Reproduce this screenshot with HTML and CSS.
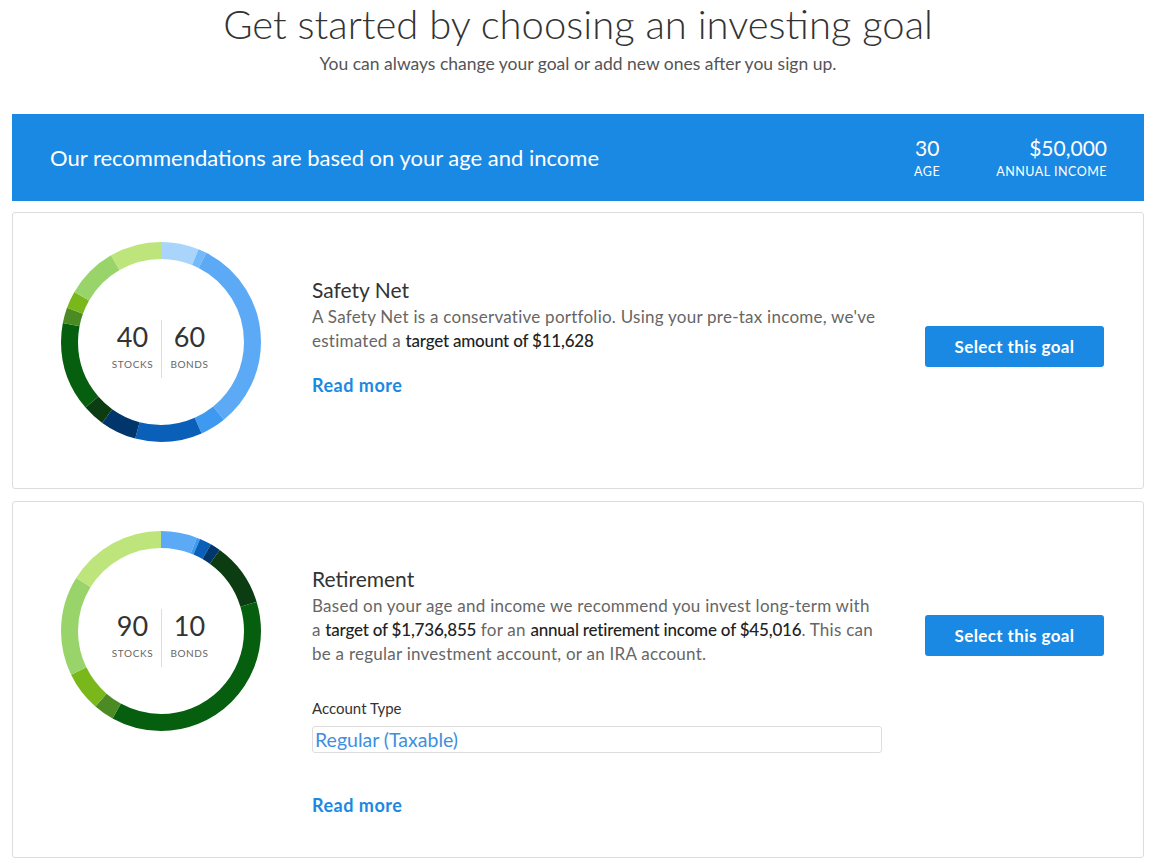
FILE: index.html
```html
<!DOCTYPE html>
<html lang="en">

<head>
    <meta charset="UTF-8">
    <meta name="viewport" content="width=device-width, initial-scale=1.0">
    <title>Choose a goal</title>
    <link rel="stylesheet" href="styles.css">
</head>

<body>
    <header class="intro">
        <h1>Get started by choosing an investing goal</h1>
        <p>You can always change your goal or add new ones after you sign up.</p>
    </header>

    <div class="banner">
        <p class="banner-text">Our recommendations are based on your age and income</p>
        <div class="stats">
            <div class="stat stat-age">
                <span class="stat-value">30</span>
                <span class="stat-label">Age</span>
            </div>
            <div class="stat stat-income">
                <span class="stat-value">$50,000</span>
                <span class="stat-label">Annual income</span>
            </div>
        </div>
    </div>

    <!-- Safety net -->
    <div class="goal-card">
        <div class="donut">
            <svg viewBox="0 0 200 200" width="200" height="200">
                <g transform="rotate(-90 100 100)" fill="none" stroke-width="17">
                    <circle cx="100" cy="100" r="91.5" pathLength="360" stroke="#a9d5fc" stroke-dasharray="22 360" stroke-dashoffset="0" />
                    <circle cx="100" cy="100" r="91.5" pathLength="360" stroke="#74baf8" stroke-dasharray="5 360" stroke-dashoffset="-22" />
                    <circle cx="100" cy="100" r="91.5" pathLength="360" stroke="#5caaf6" stroke-dasharray="114 360" stroke-dashoffset="-27" />
                    <circle cx="100" cy="100" r="91.5" pathLength="360" stroke="#3d9af0" stroke-dasharray="15 360" stroke-dashoffset="-141" />
                    <circle cx="100" cy="100" r="91.5" pathLength="360" stroke="#0a5fb8" stroke-dasharray="39 360" stroke-dashoffset="-156" />
                    <circle cx="100" cy="100" r="91.5" pathLength="360" stroke="#00366b" stroke-dasharray="21 360" stroke-dashoffset="-195" />
                    <circle cx="100" cy="100" r="91.5" pathLength="360" stroke="#0c3c12" stroke-dasharray="13 360" stroke-dashoffset="-216" />
                    <circle cx="100" cy="100" r="91.5" pathLength="360" stroke="#065e0f" stroke-dasharray="52 360" stroke-dashoffset="-229" />
                    <circle cx="100" cy="100" r="91.5" pathLength="360" stroke="#4c8a24" stroke-dasharray="9 360" stroke-dashoffset="-281" />
                    <circle cx="100" cy="100" r="91.5" pathLength="360" stroke="#79b71a" stroke-dasharray="10 360" stroke-dashoffset="-290" />
                    <circle cx="100" cy="100" r="91.5" pathLength="360" stroke="#98d46a" stroke-dasharray="30 360" stroke-dashoffset="-300" />
                    <circle cx="100" cy="100" r="91.5" pathLength="360" stroke="#bde57b" stroke-dasharray="30 360" stroke-dashoffset="-330" />
                </g>
            </svg>
            <div class="donut-center">
                <div class="split">
                    <span class="split-num">40</span>
                    <span class="split-label">Stocks</span>
                </div>
                <div class="split">
                    <span class="split-num">60</span>
                    <span class="split-label">Bonds</span>
                </div>
            </div>
        </div>
        <div class="goal-info">
            <h2>Safety Net</h2>
            <p>A Safety Net is a conservative portfolio. Using your pre-tax income, we've estimated a <strong>target amount of $11,628</strong></p>
            <a href="#" class="read-more">Read more</a>
        </div>
        <button class="select-btn">Select this goal</button>
    </div>

    <!-- Retirement -->
    <div class="goal-card">
        <div class="donut">
            <svg viewBox="0 0 200 200" width="200" height="200">
                <g transform="rotate(-90 100 100)" fill="none" stroke-width="17">
                    <circle cx="100" cy="100" r="91.5" pathLength="360" stroke="#5caaf6" stroke-dasharray="21 360" stroke-dashoffset="0" />
                    <circle cx="100" cy="100" r="91.5" pathLength="360" stroke="#3d9af0" stroke-dasharray="2 360" stroke-dashoffset="-21" />
                    <circle cx="100" cy="100" r="91.5" pathLength="360" stroke="#0a5fb8" stroke-dasharray="7 360" stroke-dashoffset="-23" />
                    <circle cx="100" cy="100" r="91.5" pathLength="360" stroke="#00366b" stroke-dasharray="6 360" stroke-dashoffset="-30" />
                    <circle cx="100" cy="100" r="91.5" pathLength="360" stroke="#0c3c12" stroke-dasharray="37 360" stroke-dashoffset="-36" />
                    <circle cx="100" cy="100" r="91.5" pathLength="360" stroke="#065e0f" stroke-dasharray="136 360" stroke-dashoffset="-73" />
                    <circle cx="100" cy="100" r="91.5" pathLength="360" stroke="#4c8a24" stroke-dasharray="12 360" stroke-dashoffset="-209" />
                    <circle cx="100" cy="100" r="91.5" pathLength="360" stroke="#79b71a" stroke-dasharray="23 360" stroke-dashoffset="-221" />
                    <circle cx="100" cy="100" r="91.5" pathLength="360" stroke="#98d46a" stroke-dasharray="58 360" stroke-dashoffset="-244" />
                    <circle cx="100" cy="100" r="91.5" pathLength="360" stroke="#bde57b" stroke-dasharray="58 360" stroke-dashoffset="-302" />
                </g>
            </svg>
            <div class="donut-center">
                <div class="split">
                    <span class="split-num">90</span>
                    <span class="split-label">Stocks</span>
                </div>
                <div class="split">
                    <span class="split-num">10</span>
                    <span class="split-label">Bonds</span>
                </div>
            </div>
        </div>
        <div class="goal-info">
            <h2>Retirement</h2>
            <p>Based on your age and income we recommend you invest long-term with a <strong>target of $1,736,855</strong> for an <strong>annual retirement income of $45,016</strong>. This can be a regular investment account, or an IRA account.</p>
            <label class="field-label" for="accountType">Account Type</label>
            <div class="select-box" id="accountType">Regular (Taxable)</div>
            <a href="#" class="read-more read-more-spaced">Read more</a>
        </div>
        <button class="select-btn">Select this goal</button>
    </div>
</body>

</html>
```

FILE: styles.css
```css
body {
    font-family: Lato, "Open Sans", sans-serif;
    margin: 0;
    padding: 0 12px;
    background-color: #fff;
    color: #666;
}

.intro {
    text-align: center;
    padding-top: 1px;
}

.intro h1 {
    margin: 0;
    font-size: 40px;
    font-weight: 300;
    line-height: 46px;
    color: #333;
}

.intro p {
    margin: 6px 0 0;
    font-size: 17.5px;
    line-height: 22px;
    color: #555;
}

.banner {
    display: flex;
    align-items: center;
    justify-content: space-between;
    height: 87px;
    margin-top: 39px;
    padding: 0 37px 0 38px;
    background-color: #1a89e3;
    color: #fff;
}

.banner-text {
    margin: 0;
    font-size: 22px;
    font-weight: 400;
}

.stats {
    display: flex;
    gap: 56px;
}

.stat {
    display: flex;
    flex-direction: column;
    gap: 4px;
}

.stat-age {
    align-items: center;
}

.stat-income {
    align-items: flex-end;
}

.stat-value {
    font-size: 21px;
    line-height: 24px;
}

.stat-label {
    font-size: 12.5px;
    line-height: 16px;
    text-transform: uppercase;
    letter-spacing: 0.5px;
}

.goal-card {
    display: flex;
    align-items: flex-start;
    margin-top: 11px;
    padding: 29px 39px 40px 48px;
    border: 1px solid #ddd;
    border-radius: 3px;
}

.goal-card + .goal-card {
    margin-top: 12px;
}

.donut {
    position: relative;
    flex: 0 0 200px;
    height: 200px;
    margin-bottom: 6px;
}

.donut svg {
    display: block;
}

.donut-center {
    position: absolute;
    top: 78px;
    left: 0;
    right: 0;
    display: flex;
    justify-content: center;
}

.split {
    display: flex;
    flex-direction: column;
    align-items: center;
    width: 56px;
    padding: 0 0 4px;
}

.split:first-child {
    border-right: 1px solid #ddd;
}

.split-num {
    font-size: 27px;
    font-weight: 400;
    line-height: 34px;
    color: #333;
}

.split-label {
    font-size: 10px;
    line-height: 20px;
    letter-spacing: 0.6px;
    text-transform: uppercase;
    color: #666;
}

.goal-info {
    flex: 0 0 570px;
    margin: 35px 0 0 51px;
}

.goal-info h2 {
    margin: 0 0 2px;
    font-size: 21px;
    font-weight: 400;
    line-height: 26px;
    color: #333;
}

.goal-info p {
    margin: 0;
    font-size: 17px;
    letter-spacing: 0.25px;
    line-height: 24px;
}

.goal-info strong {
    font-weight: 500;
    letter-spacing: -0.2px;
    color: #222;
}

.read-more {
    display: block;
    margin-top: 20px;
    font-size: 18px;
    font-weight: 700;
    letter-spacing: 0.5px;
    line-height: 24px;
    color: #1a89e3;
    text-decoration: none;
}

.read-more-spaced {
    margin-top: 40px;
}

.field-label {
    display: block;
    margin-top: 32px;
    font-size: 15px;
    line-height: 20px;
    color: #333;
}

.select-box {
    height: 27px;
    margin-top: 8px;
    padding: 0 2px;
    border: 1px solid #ddd;
    border-radius: 3px;
    box-sizing: border-box;
    font-size: 19.5px;
    line-height: 25px;
    color: #3d8fe0;
}

.select-btn {
    flex: 0 0 179px;
    height: 41px;
    margin: 84px 0 0 43px;
    font-family: inherit;
    font-size: 17px;
    font-weight: 700;
    letter-spacing: 0.4px;
    color: #fff;
    background-color: #1a89e3;
    border: none;
    border-radius: 3px;
    cursor: pointer;
}
```
